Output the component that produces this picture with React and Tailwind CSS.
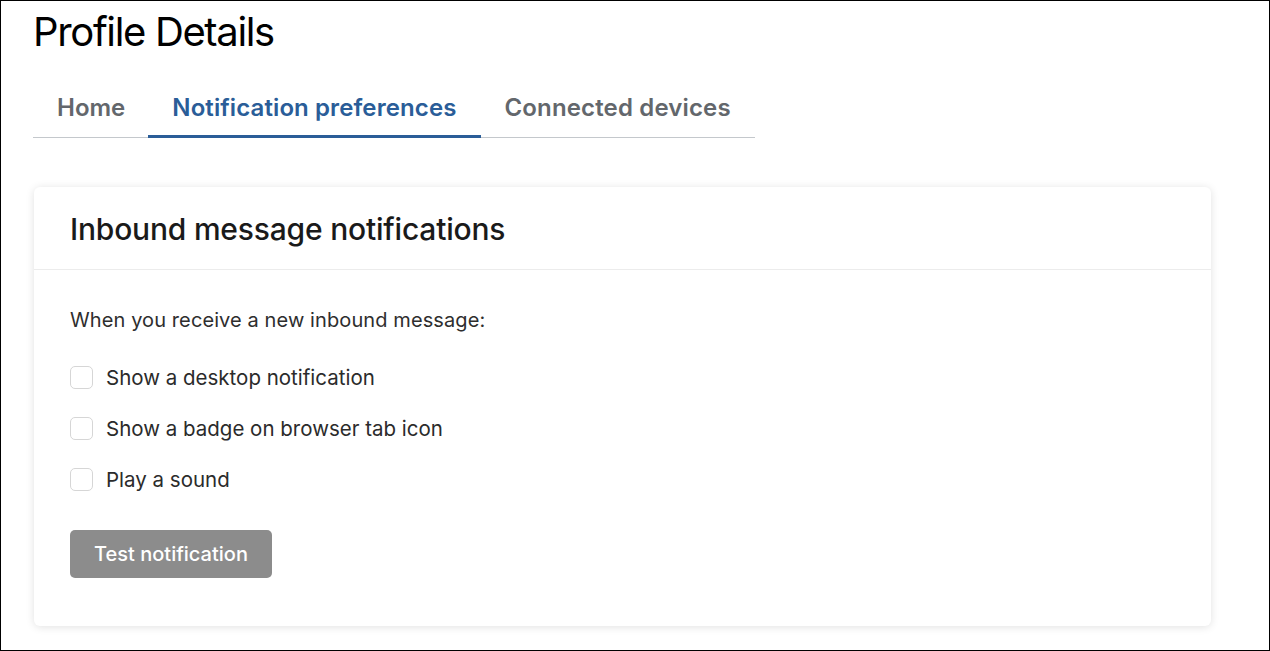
export default function App() {
  const items = [
    "Show a desktop notification",
    "Show a badge on browser tab icon",
    "Play a sound",
  ];
  return (
    <div
      className="w-[1270px] h-[651px] border border-black bg-white overflow-hidden pl-[33px] pt-[7px] box-border"
      style={{ fontFamily: "Inter, 'Noto Sans', sans-serif" }}
    >
      <h1 className="text-[40px] leading-[48px] text-black tracking-[-1.35px] font-normal -ml-[1px]">
        Profile Details
      </h1>
      <div className="mt-[37px] -ml-[1px] flex w-[722px] border-b border-[#c4c8cc]">
        <div className="shrink-0 whitespace-nowrap pl-[24px] pr-[23px] pb-[14px] text-[24px] leading-[30px] font-semibold text-[#63676c]">
          Home
        </div>
        <div className="shrink-0 whitespace-nowrap px-[24px] pb-[12px] text-[24px] leading-[30px] font-semibold text-[#2a5d98] border-b-[3px] border-[#2a5d98] -mb-px tracking-[0.1px]">
          Notification preferences
        </div>
        <div className="shrink-0 whitespace-nowrap px-[24px] pb-[14px] text-[24px] leading-[30px] font-semibold text-[#63676c] tracking-[0.15px]">
          Connected devices
        </div>
      </div>
      <div className="mt-[49px] w-[1177px] h-[439px] bg-white rounded-md shadow-[0_1px_8px_rgba(0,0,0,0.12)]">
        <div className="h-[83px] border-b border-[#ececec] px-9 flex items-center">
          <h2 className="text-[30px] leading-[36px] font-medium text-[#1a1a1a] tracking-[-0.2px] pt-[2px]">
            Inbound message notifications
          </h2>
        </div>
        <div className="px-9 pt-[36px]">
          <p className="text-[20px] leading-[28px] text-[#2e2e2e] tracking-[0.1px]">
            When you receive a new inbound message:
          </p>
          <div className="mt-[32px] flex flex-col gap-[28px]">
            {items.map((t) => (
              <label key={t} className="flex items-center gap-[13px] h-[23px]">
                <span className="w-[23px] h-[23px] rounded-[5px] border border-[#d6d6d6] bg-white"></span>
                <span className="text-[20.5px] leading-[28px] text-[#2b2b2b]">{t}</span>
              </label>
            ))}
          </div>
          <button className="mt-[39px] w-[202px] h-[48px] rounded-[5px] bg-[#8c8c8c] text-white text-[20px] font-medium">
            Test notification
          </button>
        </div>
      </div>
    </div>
  );
}
